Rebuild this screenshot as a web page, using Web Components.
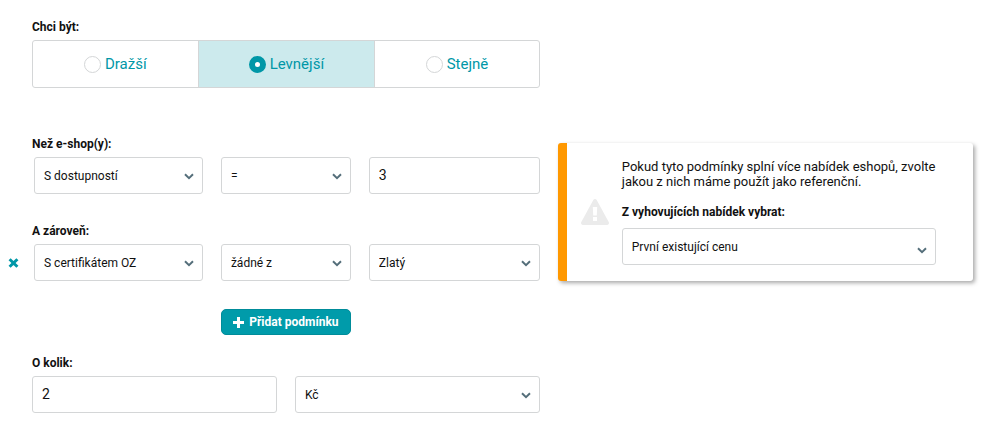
<!DOCTYPE html>
<html lang="cs">
<head>
<meta charset="utf-8">
<meta name="viewport" content="width=device-width, initial-scale=1">
<title>Podmínky přecenění</title>
<style>
    body {
        --primary: #0097a7;
        --primary-light: #cceaed;
        --border: #d4d6d7;
        --arrow: #546e7a;
        --accent: #ff9800;
        --text: #111;
        margin: 0;
        background: #fff;
        color: var(--text);
        font: 12px/15px Roboto, "Liberation Sans", sans-serif;
    }
</style>
</head>
<body>
<pricing-form>
    <choice-group name="direction" label="Chci být:" options="Dražší|Levnější|Stejně" selected="1"></choice-group>

    <condition-row label="Než e-shop(y):">
        <select-field name="Typ podmínky" options="S dostupností|S certifikátem OZ"></select-field>
        <select-field name="Operátor" options="=|&lt;|&gt;"></select-field>
        <text-field name="Hodnota" value="3"></text-field>
    </condition-row>

    <condition-row label="A zároveň:" removable>
        <select-field name="Typ podmínky" options="S certifikátem OZ|S dostupností"></select-field>
        <select-field name="Operátor" options="žádné z|některé z"></select-field>
        <select-field name="Certifikát" options="Zlatý|Modrý"></select-field>
    </condition-row>

    <add-button>Přidat podmínku</add-button>

    <amount-row>
        <text-field label="O kolik:" value="2"></text-field>
        <select-field name="Jednotka" options="Kč|%"></select-field>
    </amount-row>

    <notice-card slot="aside">
        Pokud tyto podmínky splní více nabídek eshopů, zvolte jakou z nich máme použít jako referenční.
        <select-field slot="control" label="Z vyhovujících nabídek vybrat:" options="První existující cenu|Nejnižší cenu"></select-field>
    </notice-card>
</pricing-form>

<script>
const baseStyles = `
    * { box-sizing: border-box; }
    :host { display: block; min-width: 0; }
    label, legend { font-weight: 700; }
`;

const fieldStyles = `
    label.caption {
        display: block;
        margin-bottom: var(--caption-gap, 5px);
    }

    input, select {
        display: block;
        width: 100%;
        height: 37px;
        margin: 0;
        padding: 0 9px;
        border: 1px solid var(--border);
        border-radius: 3px;
        background: #fff;
        color: var(--text);
        font: inherit;
    }

    input:focus-visible, select:focus-visible {
        outline: 2px solid var(--primary);
    }
`;

class PricingForm extends HTMLElement {
    constructor() {
        super();
        this.attachShadow({ mode: 'open' });
    }

    connectedCallback() {
        this.shadowRoot.innerHTML = `
            <style>
                ${baseStyles}
                :host {
                    display: grid;
                    grid-template-columns: 13fr 10fr;
                    gap: 18px;
                    align-items: start;
                    padding: 20px 27px 22px 0;
                }

                form {
                    --gutter: 32px;
                    min-width: 0;
                }

                aside {
                    margin-top: 123px;
                }
            </style>
            <form><slot></slot></form>
            <aside><slot name="aside"></slot></aside>
        `;
    }
}

class ChoiceGroup extends HTMLElement {
    constructor() {
        super();
        this.attachShadow({ mode: 'open' });
    }

    connectedCallback() {
        const name = this.getAttribute('name');
        const selected = Number(this.getAttribute('selected'));
        const options = this.getAttribute('options').split('|');

        this.shadowRoot.innerHTML = `
            <style>
                ${baseStyles}
                :host {
                    padding-left: var(--gutter);
                    margin-bottom: 49px;
                }

                fieldset {
                    min-width: 0;
                    margin: 0;
                    padding: 0;
                    border: 0;
                }

                legend {
                    padding: 0 0 5px;
                }

                .choices {
                    display: grid;
                    grid-template-columns: 14fr 15fr 14fr;
                    height: 48px;
                    border: 1px solid var(--border);
                    border-radius: 3px;
                    overflow: hidden;
                }

                label {
                    display: flex;
                    align-items: center;
                    justify-content: center;
                    gap: 4px;
                    color: var(--primary);
                    font-size: 15px;
                    font-weight: 400;
                    cursor: pointer;
                }

                label + label {
                    border-left: 1px solid var(--border);
                }

                label:has(input:checked) {
                    background: var(--primary-light);
                }

                input {
                    appearance: none;
                    width: 17px;
                    height: 17px;
                    margin: 0;
                    border: 1px solid var(--border);
                    border-radius: 50%;
                    background: #fff;
                }

                input:checked {
                    border: 6px solid var(--primary);
                }
            </style>
            <fieldset>
                <legend>${this.getAttribute('label')}</legend>
                <div class="choices">
                    ${options.map((option, i) => `
                        <label>
                            <input type="radio" name="${name}" value="${i}" ${i === selected ? 'checked' : ''}>
                            <span>${option}</span>
                        </label>
                    `).join('')}
                </div>
            </fieldset>
        `;
    }
}

class SelectField extends HTMLElement {
    constructor() {
        super();
        this.attachShadow({ mode: 'open' });
    }

    connectedCallback() {
        const label = this.getAttribute('label');
        const options = this.getAttribute('options').split('|');

        this.shadowRoot.innerHTML = `
            <style>
                ${baseStyles}
                ${fieldStyles}
                .box {
                    display: grid;
                    align-items: center;
                }

                select {
                    grid-area: 1 / 1;
                    appearance: none;
                    padding: 2px 26px 0 9px;
                }

                svg {
                    grid-area: 1 / 1;
                    justify-self: end;
                    width: 10px;
                    height: 7px;
                    margin: var(--arrow-drop, 2px) 9px 0 0;
                    fill: none;
                    stroke: var(--arrow);
                    stroke-width: 2;
                    pointer-events: none;
                }
            </style>
            ${label ? `<label class="caption" for="control">${label}</label>` : ''}
            <div class="box">
                <select id="control" ${label ? '' : `aria-label="${this.getAttribute('name')}"`}>
                    ${options.map(option => `<option>${option.replace('<', '&lt;')}</option>`).join('')}
                </select>
                <svg viewBox="0 0 10 7" aria-hidden="true"><path d="M1 1.3 5 5.1 9 1.3"/></svg>
            </div>
        `;
    }
}

class TextField extends HTMLElement {
    constructor() {
        super();
        this.attachShadow({ mode: 'open' });
    }

    connectedCallback() {
        const label = this.getAttribute('label');

        this.shadowRoot.innerHTML = `
            <style>
                ${baseStyles}
                ${fieldStyles}
                input {
                    padding-bottom: 2px;
                    font-size: 14px;
                }
            </style>
            ${label ? `<label class="caption" for="control">${label}</label>` : ''}
            <input id="control" type="text" inputmode="numeric" value="${this.getAttribute('value') || ''}"
                ${label ? '' : `aria-label="${this.getAttribute('name')}"`}>
        `;
    }
}

class ConditionRow extends HTMLElement {
    constructor() {
        super();
        this.attachShadow({ mode: 'open' });
    }

    connectedCallback() {
        this.shadowRoot.innerHTML = `
            <style>
                ${baseStyles}
                :host {
                    margin-bottom: 30px;
                }

                :host([removable]) {
                    margin-bottom: 28px;
                }

                fieldset {
                    min-width: 0;
                    margin: 0;
                    padding: 0;
                    border: 0;
                }

                legend {
                    padding: 0 0 5px var(--gutter);
                }

                .row {
                    display: grid;
                    grid-template-columns: 34px 1fr;
                    align-items: center;
                }

                .fields {
                    display: grid;
                    grid-template-columns: 169fr 130fr 171fr;
                    gap: 18px;
                    grid-column: 2;
                }

                button {
                    display: flex;
                    width: 26px;
                    padding: 8px;
                    border: 0;
                    background: none;
                    cursor: pointer;
                }

                svg {
                    width: 11px;
                    height: 10px;
                    flex: none;
                    stroke: var(--primary);
                    stroke-width: 3;
                }
            </style>
            <fieldset>
                <legend>${this.getAttribute('label')}</legend>
                <div class="row">
                    ${this.hasAttribute('removable') ? `
                        <button type="button" aria-label="Odebrat podmínku">
                            <svg viewBox="0 0 11 10" aria-hidden="true"><path d="M1.6 1.2 9.4 8.8M9.4 1.2 1.6 8.8"/></svg>
                        </button>
                    ` : ''}
                    <div class="fields"><slot></slot></div>
                </div>
            </fieldset>
        `;
    }
}

class AddButton extends HTMLElement {
    constructor() {
        super();
        this.attachShadow({ mode: 'open' });
    }

    connectedCallback() {
        this.shadowRoot.innerHTML = `
            <style>
                ${baseStyles}
                /* same columns as the condition fields, the button fills the middle one */
                :host {
                    display: grid;
                    grid-template-columns: 169fr 130fr 171fr;
                    gap: 18px;
                    padding-left: 34px;
                    margin-bottom: 21px;
                }

                button {
                    grid-column: 2;
                    display: flex;
                    align-items: center;
                    justify-content: center;
                    gap: 5px;
                    height: 26px;
                    padding: 0;
                    border: 1px solid #008c9a;
                    border-radius: 5px;
                    background: #009baa;
                    color: #fff;
                    font: inherit;
                    font-weight: 700;
                    white-space: nowrap;
                    cursor: pointer;
                }

                svg {
                    width: 11px;
                    height: 11px;
                    flex: none;
                    stroke: #fff;
                    stroke-width: 3;
                }
            </style>
            <button type="button">
                <svg viewBox="0 0 11 11" aria-hidden="true"><path d="M5.5 0v11M0 5.5h11"/></svg>
                <span><slot></slot></span>
            </button>
        `;
    }
}

class AmountRow extends HTMLElement {
    constructor() {
        super();
        this.attachShadow({ mode: 'open' });
    }

    connectedCallback() {
        this.shadowRoot.innerHTML = `
            <style>
                ${baseStyles}
                :host {
                    display: grid;
                    grid-template-columns: 1fr 1fr;
                    gap: 18px;
                    align-items: end;
                    padding-left: var(--gutter);
                }
            </style>
            <slot></slot>
        `;
    }
}

class NoticeCard extends HTMLElement {
    constructor() {
        super();
        this.attachShadow({ mode: 'open' });
    }

    connectedCallback() {
        this.shadowRoot.innerHTML = `
            <style>
                ${baseStyles}
                :host {
                    --caption-gap: 8px;
                    --arrow-drop: 8px;
                    display: flex;
                    align-items: center;
                    gap: 13px;
                    padding: 16px 37px 16px 14px;
                    border-left: 9px solid var(--accent);
                    border-radius: 3px;
                    box-shadow: 2px 2px 4px rgba(0, 0, 0, 0.35);
                }

                svg {
                    width: 28px;
                    height: 26px;
                    flex: none;
                }

                .content {
                    flex: 1;
                    min-width: 0;
                }

                p {
                    margin: 0 0 16px;
                    font-size: 13px;
                }
            </style>
            <svg viewBox="0 0 28 26" aria-hidden="true">
                <path fill="#ebebeb" d="M12.3 1a2 2 0 0 1 3.4 0l12 22a2 2 0 0 1-1.7 3H2a2 2 0 0 1-1.7-3z"/>
                <path fill="#fff" d="M11.8 8h4.4l-.4 8.500h-3.600zM12 18h4v4h-4z"/>
            </svg>
            <div class="content">
                <p><slot></slot></p>
                <slot name="control"></slot>
            </div>
        `;
    }
}

customElements.define('pricing-form', PricingForm);
customElements.define('choice-group', ChoiceGroup);
customElements.define('select-field', SelectField);
customElements.define('text-field', TextField);
customElements.define('condition-row', ConditionRow);
customElements.define('add-button', AddButton);
customElements.define('amount-row', AmountRow);
customElements.define('notice-card', NoticeCard);
</script>
</body>
</html>
